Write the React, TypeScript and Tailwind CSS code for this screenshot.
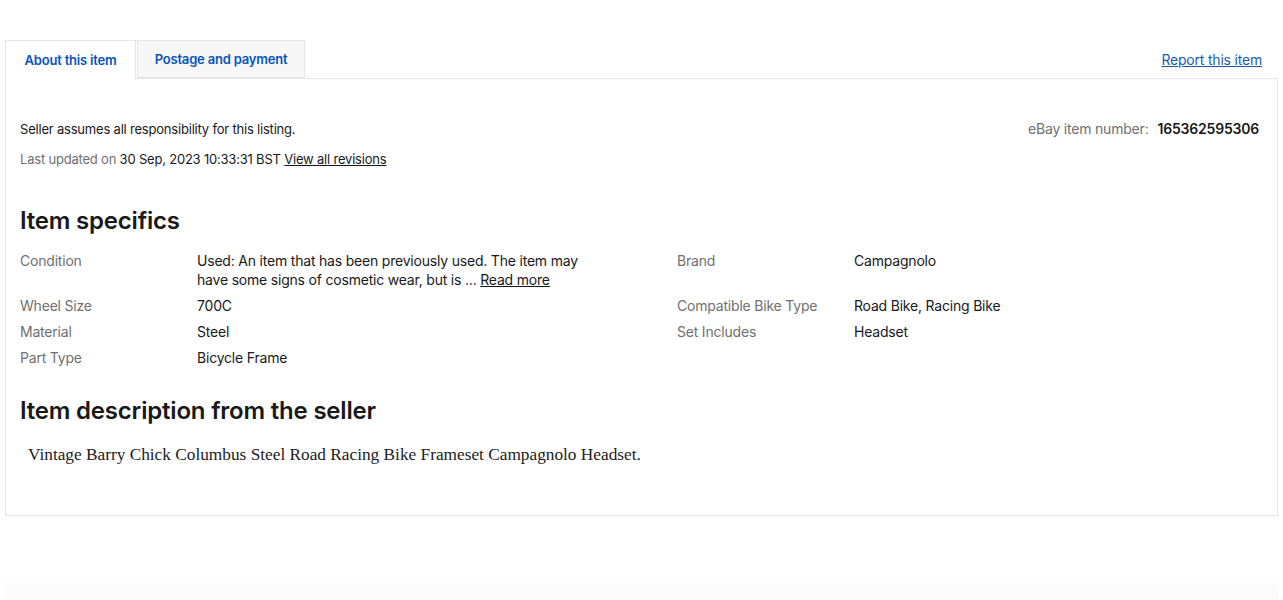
import React from "react";

const specsLeft = [
  {
    label: "Condition",
    value: (
      <>
        Used: An item that has been previously used. The item may have some signs of cosmetic wear, but is ...{" "}
        <a href="#" className="underline">Read more</a>
      </>
    ),
  },
  { label: "Wheel Size", value: "700C" },
  { label: "Material", value: "Steel" },
  { label: "Part Type", value: "Bicycle Frame" },
];

const specsRight = [
  { label: "Brand", value: "Campagnolo", tall: true },
  { label: "Compatible Bike Type", value: "Road Bike, Racing Bike" },
  { label: "Set Includes", value: "Headset" },
];

function SpecRow({ label, value, tall }: { label: string; value: React.ReactNode; tall?: boolean }) {
  return (
    <div className={"flex mb-[7px] " + (tall ? "min-h-[38px]" : "")}>
      <div className="w-[177px] shrink-0 text-[#707070]">{label}</div>
      <div className="w-[385px] text-[#191919]">{value}</div>
    </div>
  );
}

export default function App() {
  return (
    <div className="min-h-screen bg-white font-['Inter',sans-serif] tracking-[-0.2px] text-[#191919]">
      <div className="px-[5px] pt-[40px]">
        <div className="flex items-end">
          <div className="h-[39px] w-[131px] -mb-px pt-[2px] flex items-center justify-center border border-b-0 border-[#e5e5e5] bg-white text-[13px] font-semibold text-[#0654ba] relative z-10">
            About this item
          </div>
          <div className="ml-[1px] h-[38px] w-[168px] pt-[2px] flex items-center justify-center border border-[#e5e5e5] bg-[#f7f7f7] text-[13px] font-semibold text-[#0654ba]">
            Postage and payment
          </div>
          <div className="flex-1 flex justify-end items-center h-[38px] pr-[16px]">
            <a href="#" className="text-[14px] text-[#1c5cab] underline">Report this item</a>
          </div>
        </div>
        <div className="border border-[#e5e5e5] h-[438px] px-[14px] pt-[41px]">
          <div className="flex justify-between">
            <div className="text-[13px] leading-[18px]">
              <div>Seller assumes all responsibility for this listing.</div>
              <div className="mt-[12px] text-[#707070]">
                Last updated on <span className="text-[#191919]">30 Sep, 2023 10:33:31 BST</span>{" "}
                <a href="#" className="underline text-[#191919]">View all revisions</a>
              </div>
            </div>
            <div className="text-[14px] leading-[18px] pr-[4px]">
              <span className="text-[#707070]">eBay item number:</span>
              <span className="ml-[9px] font-semibold">165362595306</span>
            </div>
          </div>

          <h2 className="mt-[38px] text-[24px] leading-[30px] font-semibold">Item specifics</h2>
          <div className="mt-[15px] flex text-[14px] leading-[19px]">
            <div className="w-[657px]">
              {specsLeft.map((s) => (
                <SpecRow key={s.label} label={s.label} value={s.value} />
              ))}
            </div>
            <div className="flex-1">
              {specsRight.map((s) => (
                <SpecRow key={s.label} label={s.label} value={s.value} tall={s.tall} />
              ))}
            </div>
          </div>

          <h2 className="mt-[22px] text-[24px] leading-[30px] font-semibold">Item description from the seller</h2>
          <p className="mt-[18px] ml-[8px] font-['Liberation_Serif',serif] tracking-normal text-[17.3px] leading-[22px] text-[#222]">
            Vintage Barry Chick Columbus Steel Road Racing Bike Frameset Campagnolo Headset.
          </p>
        </div>
        <div className="mt-[62px] h-[40px] bg-gradient-to-b from-[#fdfdfd] to-[#f7f7f7]" />
      </div>
    </div>
  );
}
